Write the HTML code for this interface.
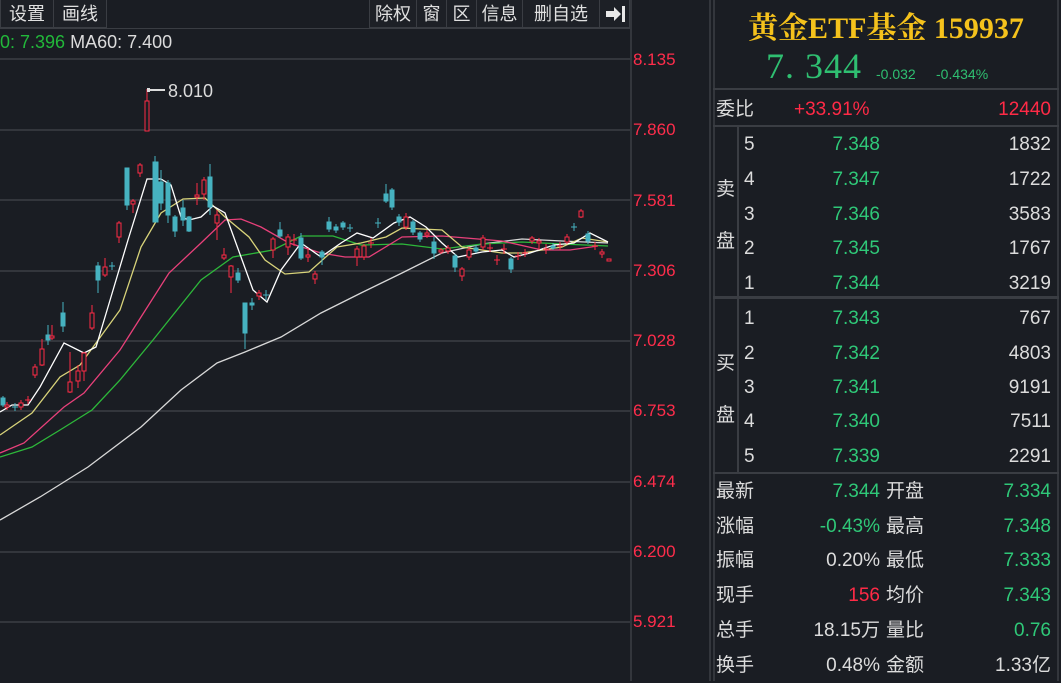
<!DOCTYPE html>
<html><head><meta charset="utf-8"><style>
*{margin:0;padding:0;box-sizing:border-box}
body{width:1061px;height:681px;background:#1a1d23;overflow:hidden;position:relative;font-family:"Liberation Sans","Noto Sans CJK SC",sans-serif;color:#dcdcdc}
.btn{position:absolute;top:0;height:28px;line-height:28px;font-size:18px;color:#e0e0e0;border-right:1px solid #3a3d43;border-bottom:1px solid #3a3d43;background:#1d2026;text-align:center}
.t{position:absolute;white-space:nowrap}
.ax{position:absolute;left:633px;color:#ff2d4b;font-size:17px}
.g{color:#2fc878}.w{color:#dcdcdc}.r{color:#ff2a46}
.row{position:absolute;left:716px;width:335px;height:34px;font-size:19px;line-height:34px}
.row span{position:absolute}
.hl{position:absolute;background:#3a3d43}
</style></head><body>
<div class="btn" style="left:0;width:54px;border-left:1px solid #3a3d43">设置</div>
<div class="btn" style="left:54px;width:53px">画线</div>
<div class="btn" style="left:369px;width:48px;border-left:1px solid #3a3d43">除权</div>
<div class="btn" style="left:417px;width:30px">窗</div>
<div class="btn" style="left:447px;width:30px">区</div>
<div class="btn" style="left:477px;width:46px">信息</div>
<div class="btn" style="left:523px;width:77px">删自选</div>
<div class="btn" style="left:600px;width:30px">
<svg width="22" height="18" viewBox="0 0 22 18" style="margin-top:5px"><path d="M2 6h8V2l7 7-7 7v-4H2z" fill="#e8e8e8"/><rect x="18" y="1" width="3" height="16" fill="#e8e8e8"/></svg></div>
<div class="hl" style="left:0;top:28px;width:630px;height:1px"></div>
<div class="t" style="left:0;top:32px;font-size:18px"><span style="color:#22b83a">0: 7.396</span> <span class="w">MA60: 7.400</span></div>
<div class="hl" style="left:630px;top:0;width:2px;height:681px;background:#33363c"></div>
<div class="hl" style="left:709px;top:0;width:2px;height:681px;background:#33363c"></div>
<div class="ax" style="top:50px">8.135</div>
<div class="ax" style="top:120px">7.860</div>
<div class="ax" style="top:191px">7.581</div>
<div class="ax" style="top:261px">7.306</div>
<div class="ax" style="top:331px">7.028</div>
<div class="ax" style="top:401px">6.753</div>
<div class="ax" style="top:472px">6.474</div>
<div class="ax" style="top:542px">6.200</div>
<div class="ax" style="top:612px">5.921</div>
<svg width="630" height="681" style="position:absolute;left:0;top:0" shape-rendering="crispEdges">
<g stroke="#33363c" stroke-width="2">
<line x1="0" y1="59" x2="630" y2="59"/><line x1="0" y1="130" x2="630" y2="130"/><line x1="0" y1="200" x2="630" y2="200"/><line x1="0" y1="271" x2="630" y2="271"/><line x1="0" y1="341" x2="630" y2="341"/><line x1="0" y1="411" x2="630" y2="411"/><line x1="0" y1="482" x2="630" y2="482"/><line x1="0" y1="552" x2="630" y2="552"/><line x1="0" y1="622" x2="630" y2="622"/>
</g>
<g fill="none" stroke-width="1.3" shape-rendering="auto">
<polyline stroke="#d8d8d8" points="0,520 40,497 88,467 141,427 181,390 217,363 245,352 281,337 321,313 361,293 402,273 442,253 482,244 522,239 562,241 608,243"/>
<polyline stroke="#2db83a" points="0,457 32,447 60,430 92,410 120,380 153,340 201,280 233,257 273,250 301,236 333,236 361,245 402,244 442,249 482,244 522,242 562,244 608,246"/>
<polyline stroke="#e8407a" points="0,453 24,443 64,407 84,393 120,350 169,273 201,243 225,220 241,219 261,227 289,243 321,253 345,257 369,257 402,237 442,236 502,241 542,250 570,250 598,246"/>
<polyline stroke="#d8d37a" points="0,435 32,413 60,377 80,365 96,343 120,310 141,247 161,213 183,199 205,198 225,217 249,237 265,260 285,274 309,272 337,247 361,243 386,237 402,228 442,230 462,247 502,253 522,253 562,247 582,238 608,242"/>
<polyline stroke="#ffffff" points="0,412 12,405 28,405 40,387 64,343 84,353 96,347 108,307 128,240 147,179 161,179 171,185 181,217 189,220 201,217 213,206 225,213 241,257 253,290 267,302 281,270 301,243 321,257 341,243 357,233 373,238 394,223 410,217 426,227 442,243 458,257 482,252 502,250 514,257 530,253 554,245 574,243 590,233 608,242"/>
</g>
<g stroke="#46b2c0" fill="#46b2c0">
<line x1="3" y1="396" x2="3" y2="407"/><rect x="1" y="398" width="4" height="7"/>
<line x1="15" y1="403" x2="15" y2="411"/><line x1="12" y1="407" x2="18" y2="407"/>
<line x1="48" y1="325" x2="48" y2="345"/><rect x="46" y="335" width="4" height="5"/>
<line x1="63" y1="302" x2="63" y2="332"/><rect x="61" y="313" width="4" height="13"/>
<line x1="98" y1="262" x2="98" y2="293"/><rect x="96" y="266" width="4" height="14"/>
<line x1="112" y1="262" x2="112" y2="270"/><line x1="109" y1="266" x2="115" y2="266"/>
<line x1="127" y1="168" x2="127" y2="210"/><rect x="125" y="168" width="4" height="37"/>
<line x1="155" y1="156" x2="155" y2="222"/><rect x="153" y="162" width="5" height="60"/>
<line x1="161" y1="170" x2="161" y2="210"/><rect x="159" y="182" width="4" height="21"/>
<line x1="168" y1="180" x2="168" y2="223"/><rect x="166" y="183" width="4" height="32"/>
<line x1="175" y1="215" x2="175" y2="237"/><rect x="173" y="217" width="4" height="14"/>
<line x1="183" y1="200" x2="183" y2="226"/><rect x="181" y="208" width="4" height="12"/>
<line x1="189" y1="216" x2="189" y2="232"/><rect x="187" y="217" width="4" height="14"/>
<line x1="210" y1="164" x2="210" y2="215"/><rect x="208" y="177" width="4" height="30"/>
<line x1="238" y1="268" x2="238" y2="283"/><rect x="236" y="273" width="4" height="7"/>
<line x1="245" y1="303" x2="245" y2="349"/><rect x="243" y="303" width="4" height="30"/>
<line x1="252" y1="298" x2="252" y2="310"/><rect x="250" y="303" width="4" height="2"/>
<line x1="266" y1="290" x2="266" y2="300"/><line x1="263" y1="295" x2="269" y2="295"/>
<line x1="280" y1="222" x2="280" y2="238"/><rect x="278" y="230" width="4" height="6"/>
<line x1="301" y1="233" x2="301" y2="260"/><rect x="299" y="238" width="4" height="20"/>
<line x1="322" y1="250" x2="322" y2="265"/><rect x="320" y="252" width="4" height="5"/>
<line x1="329" y1="217" x2="329" y2="232"/><rect x="327" y="222" width="4" height="7"/>
<line x1="336" y1="224" x2="336" y2="233"/><rect x="334" y="227" width="4" height="3"/>
<line x1="343" y1="221" x2="343" y2="230"/><rect x="341" y="223" width="4" height="4"/>
<line x1="350" y1="224" x2="350" y2="232"/><line x1="347" y1="228" x2="353" y2="228"/>
<line x1="378" y1="218" x2="378" y2="228"/><line x1="375" y1="223" x2="381" y2="223"/>
<line x1="386" y1="184" x2="386" y2="203"/><rect x="384" y="194" width="4" height="7"/>
<line x1="392" y1="188" x2="392" y2="210"/><rect x="390" y="190" width="4" height="17"/>
<line x1="399" y1="214" x2="399" y2="226"/><rect x="397" y="217" width="4" height="5"/>
<line x1="413" y1="220" x2="413" y2="235"/><rect x="411" y="222" width="4" height="10"/>
<line x1="420" y1="231" x2="420" y2="242"/><rect x="418" y="233" width="4" height="6"/>
<line x1="434" y1="237" x2="434" y2="259"/><rect x="432" y="242" width="4" height="11"/>
<line x1="455" y1="254" x2="455" y2="272"/><rect x="453" y="256" width="4" height="11"/>
<line x1="476" y1="245" x2="476" y2="253"/><rect x="474" y="248" width="4" height="3"/>
<line x1="511" y1="257" x2="511" y2="273"/><rect x="509" y="259" width="4" height="10"/>
<line x1="553" y1="243" x2="553" y2="250"/><rect x="551" y="246" width="4" height="2"/>
<line x1="574" y1="223" x2="574" y2="231"/><line x1="571" y1="227" x2="577" y2="227"/>
<line x1="588" y1="231" x2="588" y2="244"/><rect x="586" y="234" width="4" height="7"/>
</g>
<g stroke="#ff2a46" fill="#1a1d23">
<line x1="7" y1="402" x2="7" y2="410"/><rect x="5" y="405" width="4" height="2"/>
<line x1="21" y1="400" x2="21" y2="410"/><rect x="19" y="403" width="4" height="4"/>
<line x1="28" y1="396" x2="28" y2="404"/><line x1="25" y1="400" x2="31" y2="400"/>
<line x1="35" y1="364" x2="35" y2="378"/><rect x="33" y="367" width="4" height="8"/>
<line x1="42" y1="339" x2="42" y2="366"/><rect x="40" y="349" width="4" height="16"/>
<line x1="52" y1="325" x2="52" y2="340"/><rect x="50" y="336" width="4" height="2"/>
<line x1="70" y1="352" x2="70" y2="393"/><rect x="68" y="382" width="4" height="10"/>
<line x1="78" y1="365" x2="78" y2="388"/><rect x="76" y="371" width="4" height="10"/>
<line x1="84" y1="352" x2="84" y2="381"/><rect x="82" y="353" width="4" height="18"/>
<line x1="92" y1="305" x2="92" y2="330"/><rect x="90" y="313" width="4" height="15"/>
<line x1="105" y1="258" x2="105" y2="277"/><rect x="103" y="267" width="4" height="8"/>
<line x1="119" y1="221" x2="119" y2="243"/><rect x="117" y="223" width="4" height="14"/>
<line x1="133" y1="199" x2="133" y2="213"/><rect x="131" y="201" width="4" height="3"/>
<line x1="140" y1="163" x2="140" y2="177"/><rect x="138" y="165" width="4" height="8"/>
<line x1="147" y1="89" x2="147" y2="131"/><rect x="145" y="101" width="4" height="30"/>
<line x1="197" y1="183" x2="197" y2="205"/><rect x="195" y="195" width="4" height="2"/>
<line x1="204" y1="177" x2="204" y2="200"/><rect x="202" y="180" width="4" height="14"/>
<line x1="217" y1="210" x2="217" y2="240"/><rect x="215" y="215" width="4" height="8"/>
<line x1="224" y1="248" x2="224" y2="260"/><rect x="222" y="255" width="4" height="3"/>
<line x1="231" y1="265" x2="231" y2="293"/><rect x="229" y="266" width="4" height="11"/>
<line x1="259" y1="290" x2="259" y2="300"/><rect x="257" y="293" width="4" height="3"/>
<line x1="273" y1="237" x2="273" y2="258"/><rect x="271" y="239" width="4" height="11"/>
<line x1="288" y1="234" x2="288" y2="255"/><rect x="286" y="237" width="4" height="10"/>
<line x1="294" y1="234" x2="294" y2="246"/><line x1="291" y1="240" x2="297" y2="240"/>
<line x1="308" y1="248" x2="308" y2="262"/><rect x="306" y="255" width="4" height="2"/>
<line x1="315" y1="271" x2="315" y2="284"/><rect x="313" y="274" width="4" height="5"/>
<line x1="357" y1="246" x2="357" y2="266"/><rect x="355" y="249" width="4" height="8"/>
<line x1="364" y1="244" x2="364" y2="260"/><rect x="362" y="246" width="4" height="11"/>
<line x1="371" y1="238" x2="371" y2="248"/><line x1="368" y1="243" x2="374" y2="243"/>
<line x1="406" y1="213" x2="406" y2="230"/><rect x="404" y="217" width="4" height="10"/>
<line x1="427" y1="230" x2="427" y2="238"/><rect x="425" y="233" width="4" height="2"/>
<line x1="441" y1="248" x2="441" y2="254"/><rect x="439" y="250" width="4" height="2"/>
<line x1="448" y1="245" x2="448" y2="254"/><rect x="446" y="248" width="4" height="3"/>
<line x1="462" y1="267" x2="462" y2="281"/><rect x="460" y="269" width="4" height="7"/>
<line x1="469" y1="247" x2="469" y2="260"/><rect x="467" y="250" width="4" height="7"/>
<line x1="483" y1="235" x2="483" y2="250"/><rect x="481" y="238" width="4" height="9"/>
<line x1="490" y1="243" x2="490" y2="252"/><line x1="487" y1="248" x2="493" y2="248"/>
<line x1="497" y1="255" x2="497" y2="265"/><line x1="494" y1="260" x2="500" y2="260"/>
<line x1="504" y1="244" x2="504" y2="254"/><line x1="501" y1="249" x2="507" y2="249"/>
<line x1="518" y1="252" x2="518" y2="260"/><line x1="515" y1="256" x2="521" y2="256"/>
<line x1="525" y1="249" x2="525" y2="257"/><line x1="522" y1="253" x2="528" y2="253"/>
<line x1="532" y1="236" x2="532" y2="244"/><rect x="530" y="238" width="4" height="3"/>
<line x1="539" y1="238" x2="539" y2="250"/><rect x="537" y="241" width="4" height="2"/>
<line x1="546" y1="244" x2="546" y2="254"/><line x1="543" y1="249" x2="549" y2="249"/>
<line x1="560" y1="242" x2="560" y2="250"/><line x1="557" y1="246" x2="563" y2="246"/>
<line x1="567" y1="234" x2="567" y2="244"/><rect x="565" y="237" width="4" height="5"/>
<line x1="581" y1="209" x2="581" y2="218"/><rect x="579" y="211" width="4" height="6"/>
<line x1="595" y1="242" x2="595" y2="250"/><line x1="592" y1="246" x2="598" y2="246"/>
<line x1="602" y1="249" x2="602" y2="258"/><rect x="600" y="252" width="4" height="2"/>
<rect x="607" y="259" width="4" height="2"/>
</g>
<line x1="149" y1="90" x2="165" y2="90" stroke="#dcdcdc" stroke-width="2"/><rect x="147" y="88" width="3" height="4" fill="#dcdcdc"/>
<text x="168" y="97" fill="#dcdcdc" font-size="18" font-family="Liberation Sans,sans-serif">8.010</text>
</svg>

<div style="position:absolute;left:713px;top:0;width:346px;height:681px;border-left:2px solid #33363c;border-right:2px solid #33363c"></div>
<div class="t" style="left:713px;width:346px;top:3px;text-align:center;font-family:'Liberation Serif','Noto Serif CJK SC',serif;font-weight:bold;font-size:30px;color:#f5c21c">黄金ETF基金 159937</div>
<div class="t" style="left:766px;top:45px;font-family:'Liberation Serif',serif;font-size:36px;color:#2fbf71;letter-spacing:1px">7. 344</div>
<div class="t" style="left:876px;top:66px;font-size:14px;color:#2fbf71">-0.032</div>
<div class="t" style="left:936px;top:66px;font-size:14px;color:#2fbf71">-0.434%</div>
<div class="hl" style="left:713px;top:88px;width:346px;height:2px"></div>
<div class="hl" style="left:713px;top:125px;width:346px;height:2px"></div>
<div class="hl" style="left:713px;top:296px;width:346px;height:3px"></div>
<div class="hl" style="left:713px;top:472px;width:346px;height:2px"></div>
<div class="hl" style="left:737px;top:127px;width:2px;height:345px"></div>

<div class="row" style="top:93px"><span class="w" style="left:0">委比</span><span class="r" style="left:78px">+33.91%</span><span class="r" style="right:0">12440</span></div>
<div class="t w" style="left:716px;top:174px;font-size:19px">卖</div>
<div class="t w" style="left:716px;top:226px;font-size:19px">盘</div>
<div class="t w" style="left:716px;top:348px;font-size:19px">买</div>
<div class="t w" style="left:716px;top:400px;font-size:19px">盘</div>

<div class="row" style="top:128px"><span class="w" style="left:28px">5</span><span class="g" style="right:171px">7.348</span><span class="w" style="right:0">1832</span></div>
<div class="row" style="top:163px"><span class="w" style="left:28px">4</span><span class="g" style="right:171px">7.347</span><span class="w" style="right:0">1722</span></div>
<div class="row" style="top:198px"><span class="w" style="left:28px">3</span><span class="g" style="right:171px">7.346</span><span class="w" style="right:0">3583</span></div>
<div class="row" style="top:232px"><span class="w" style="left:28px">2</span><span class="g" style="right:171px">7.345</span><span class="w" style="right:0">1767</span></div>
<div class="row" style="top:267px"><span class="w" style="left:28px">1</span><span class="g" style="right:171px">7.344</span><span class="w" style="right:0">3219</span></div>

<div class="row" style="top:302px"><span class="w" style="left:28px">1</span><span class="g" style="right:171px">7.343</span><span class="w" style="right:0">767</span></div>
<div class="row" style="top:337px"><span class="w" style="left:28px">2</span><span class="g" style="right:171px">7.342</span><span class="w" style="right:0">4803</span></div>
<div class="row" style="top:371px"><span class="w" style="left:28px">3</span><span class="g" style="right:171px">7.341</span><span class="w" style="right:0">9191</span></div>
<div class="row" style="top:405px"><span class="w" style="left:28px">4</span><span class="g" style="right:171px">7.340</span><span class="w" style="right:0">7511</span></div>
<div class="row" style="top:440px"><span class="w" style="left:28px">5</span><span class="g" style="right:171px">7.339</span><span class="w" style="right:0">2291</span></div>

<div class="row" style="top:475px"><span class="w" style="left:0">最新</span><span class="g" style="right:171px">7.344</span><span class="w" style="left:170px">开盘</span><span class="g" style="right:0">7.334</span></div>
<div class="row" style="top:510px"><span class="w" style="left:0">涨幅</span><span class="g" style="right:171px">-0.43%</span><span class="w" style="left:170px">最高</span><span class="g" style="right:0">7.348</span></div>
<div class="row" style="top:544px"><span class="w" style="left:0">振幅</span><span class="w" style="right:171px">0.20%</span><span class="w" style="left:170px">最低</span><span class="g" style="right:0">7.333</span></div>
<div class="row" style="top:579px"><span class="w" style="left:0">现手</span><span class="r" style="right:171px">156</span><span class="w" style="left:170px">均价</span><span class="g" style="right:0">7.343</span></div>
<div class="row" style="top:614px"><span class="w" style="left:0">总手</span><span class="w" style="right:171px">18.15万</span><span class="w" style="left:170px">量比</span><span class="g" style="right:0">0.76</span></div>
<div class="row" style="top:649px"><span class="w" style="left:0">换手</span><span class="w" style="right:171px">0.48%</span><span class="w" style="left:170px">金额</span><span class="w" style="right:0">1.33亿</span></div>
</body></html>
